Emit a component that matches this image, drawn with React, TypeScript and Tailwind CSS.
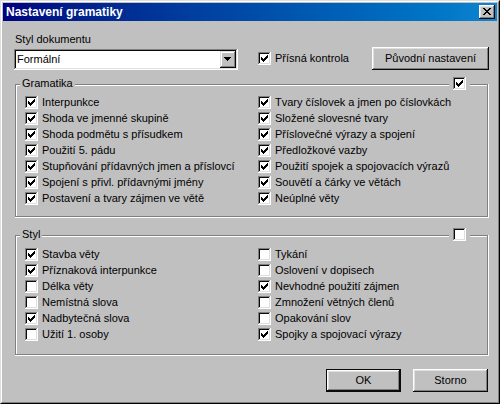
import React from "react";

const grammarLeft = [
  "Interpunkce",
  "Shoda ve jmenné skupině",
  "Shoda podmětu s přísudkem",
  "Použití 5. pádu",
  "Stupňování přídavných jmen a příslovcí",
  "Spojení s přivl. přídavnými jmény",
  "Postavení a tvary zájmen ve větě",
];

const grammarRight = [
  "Tvary číslovek a jmen po číslovkách",
  "Složené slovesné tvary",
  "Příslovečné výrazy a spojení",
  "Předložkové vazby",
  "Použití spojek a spojovacích výrazů",
  "Souvětí a čárky ve větách",
  "Neúplné věty",
];

const styleLeft: [string, boolean][] = [
  ["Stavba věty", true],
  ["Příznaková interpunkce", true],
  ["Délka věty", false],
  ["Nemístná slova", false],
  ["Nadbytečná slova", true],
  ["Užití 1. osoby", false],
];

const styleRight: [string, boolean][] = [
  ["Tykání", false],
  ["Oslovení v dopisech", false],
  ["Nevhodné použití zájmen", true],
  ["Zmnožení větných členů", false],
  ["Opakování slov", false],
  ["Spojky a spojovací výrazy", true],
];

// classic 7x7 check mark
const CHECK = [
  [6, 0],
  [5, 1], [6, 1],
  [0, 2], [4, 2], [5, 2], [6, 2],
  [0, 3], [1, 3], [3, 3], [4, 3], [5, 3],
  [0, 4], [1, 4], [2, 4], [3, 4], [4, 4],
  [1, 5], [2, 5], [3, 5],
  [2, 6],
];

const CROSS = [
  [0, 0], [1, 0], [6, 0], [7, 0],
  [1, 1], [2, 1], [5, 1], [6, 1],
  [2, 2], [3, 2], [4, 2], [5, 2],
  [3, 3], [4, 3],
  [2, 4], [3, 4], [4, 4], [5, 4],
  [1, 5], [2, 5], [5, 5], [6, 5],
  [0, 6], [1, 6], [6, 6], [7, 6],
];

function Pixels({ pts, w, h, className }: { pts: number[][]; w: number; h: number; className?: string }) {
  return (
    <svg className={className} width={w} height={h} viewBox={`0 0 ${w} ${h}`} shapeRendering="crispEdges">
      {pts.map(([x, y]) => (
        <rect key={`${x}-${y}`} x={x} y={y} width="1" height="1" fill="#000" />
      ))}
    </svg>
  );
}

function Check({ on }: { on: boolean }) {
  return (
    <span className="relative block h-[13px] w-[13px] shrink-0 bg-white shadow-[inset_-1px_-1px_#fff,inset_1px_1px_#808080,inset_-2px_-2px_#dfdfdf,inset_2px_2px_#0a0a0a]">
      {on && <Pixels pts={CHECK} w={7} h={7} className="absolute left-[3px] top-[3px]" />}
    </span>
  );
}

function CheckRow({ label, on }: { label: string; on: boolean }) {
  return (
    <div className="flex h-[16px] items-start gap-[4px] pt-[2px]">
      <Check on={on} />
      <span className="whitespace-nowrap text-[11px] leading-[13px] text-black">{label}</span>
    </div>
  );
}

function Button({ children, isDefault, className }: { children: React.ReactNode; isDefault?: boolean; className?: string }) {
  return (
    <div
      className={`flex h-[23px] items-center justify-center bg-[#c0c0c0] text-[11px] leading-[13px] text-black ${
        isDefault
          ? "shadow-[inset_-1px_-1px_#0a0a0a,inset_1px_1px_#0a0a0a,inset_-2px_-2px_#0a0a0a,inset_2px_2px_#fff,inset_-3px_-3px_#808080,inset_3px_3px_#dfdfdf]"
          : "shadow-[inset_-1px_-1px_#0a0a0a,inset_1px_1px_#fff,inset_-2px_-2px_#808080,inset_2px_2px_#dfdfdf]"
      } ${className ?? ""}`}
    >
      {children}
    </div>
  );
}

function Group({
  title,
  on,
  left,
  right,
  className,
}: {
  title: string;
  on: boolean;
  left: [string, boolean][];
  right: [string, boolean][];
  className: string;
}) {
  return (
    <div
      className={`relative ml-[1px] w-[474px] shadow-[inset_-1px_-1px_#fff,inset_-2px_-2px_#808080,inset_1px_1px_#808080,inset_2px_2px_#fff] ${className}`}
    >
      <span className="absolute left-[5px] top-[-7px] bg-[#c0c0c0] px-[2px] text-[11px] leading-[13px] text-black">
        {title}
      </span>
      <span className="absolute right-[19px] top-[-7px] bg-[#c0c0c0] px-[4px]">
        <Check on={on} />
      </span>
      <div className="grid grid-cols-[233px_1fr]">
        <div className="flex flex-col">
          {left.map(([l, v]) => (
            <CheckRow key={l} label={l} on={v} />
          ))}
        </div>
        <div className="flex flex-col">
          {right.map(([l, v]) => (
            <CheckRow key={l} label={l} on={v} />
          ))}
        </div>
      </div>
    </div>
  );
}

export default function App() {
  return (
    <div className="h-[404px] w-[500px] overflow-hidden border border-b-black border-l-[#dfdfdf] border-r-black border-t-[#dfdfdf] bg-[#c0c0c0] font-['Liberation_Sans',Arial,sans-serif]">
      <div className="flex h-full flex-col border border-b-[#808080] border-l-white border-r-[#808080] border-t-white p-px">
        {/* Title bar */}
        <div className="flex h-[18px] shrink-0 items-center justify-between bg-gradient-to-r from-[#000080] to-[#1084d0] pl-[3px] pr-[2px]">
          <span className="text-[12px] font-bold leading-[14px] text-white">Nastavení gramatiky</span>
          <div className="relative h-[14px] w-[16px] bg-[#c0c0c0] shadow-[inset_-1px_-1px_#0a0a0a,inset_1px_1px_#fff,inset_-2px_-2px_#808080,inset_2px_2px_#dfdfdf]">
            <Pixels pts={CROSS} w={8} h={7} className="absolute left-[4px] top-[3px]" />
          </div>
        </div>

        {/* Body */}
        <div className="flex flex-1 flex-col pl-[11px] pt-[12px]">
          <div className="flex h-[37px] items-start">
            <div className="w-[224px]">
              <div className="ml-[1px] text-[11px] leading-[13px] text-black">Styl dokumentu</div>
              <div className="mt-[3px] flex h-[21px] items-center justify-between bg-white pl-[3px] pr-[2px] shadow-[inset_-1px_-1px_#fff,inset_1px_1px_#808080,inset_-2px_-2px_#dfdfdf,inset_2px_2px_#0a0a0a]">
                <span className="text-[11px] leading-[13px] text-black">Formální</span>
                <div className="relative h-[17px] w-[16px] bg-[#c0c0c0] shadow-[inset_-1px_-1px_#0a0a0a,inset_1px_1px_#dfdfdf,inset_-2px_-2px_#808080,inset_2px_2px_#fff]">
                  <svg className="absolute left-[4px] top-[6px]" width="7" height="4" viewBox="0 0 7 4" shapeRendering="crispEdges">
                    <rect x="0" y="0" width="7" height="1" fill="#000" />
                    <rect x="1" y="1" width="5" height="1" fill="#000" />
                    <rect x="2" y="2" width="3" height="1" fill="#000" />
                    <rect x="3" y="3" width="1" height="1" fill="#000" />
                  </svg>
                </div>
              </div>
            </div>
            <div className="ml-[20px] mt-[19px] flex items-start gap-[4px]">
              <Check on />
              <span className="whitespace-nowrap text-[11px] leading-[13px] text-black">Přísná kontrola</span>
            </div>
            <Button className="ml-auto mr-[8px] mt-[14px] w-[117px]">Původní nastavení</Button>
          </div>

          <Group
            title="Gramatika"
            on
            left={grammarLeft.map((l) => [l, true])}
            right={grammarRight.map((l) => [l, true])}
            className="mt-[14px] h-[134px] pl-[10px] pt-[10px]"
          />

          <Group
            title="Styl"
            on={false}
            left={styleLeft}
            right={styleRight}
            className="mt-[17px] h-[121px] pl-[10px] pt-[11px]"
          />

          <div className="mt-[13px] flex justify-end gap-[12px] pr-[9px]">
            <Button isDefault className="w-[75px]">OK</Button>
            <Button className="w-[75px]">Storno</Button>
          </div>
        </div>
      </div>
    </div>
  );
}
